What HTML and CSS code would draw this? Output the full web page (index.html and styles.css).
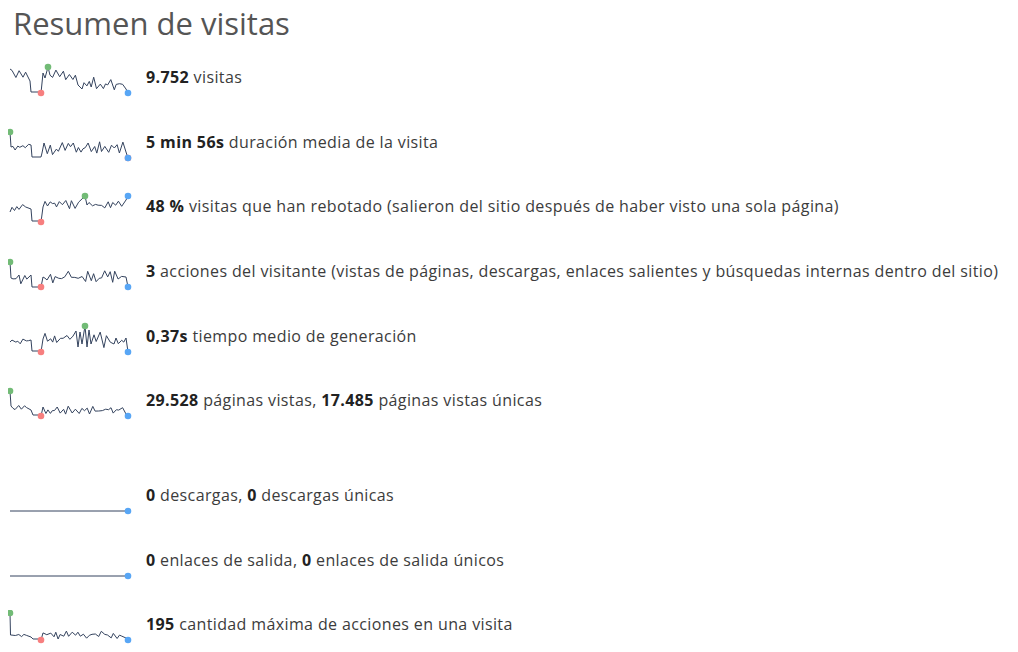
FILE: index.html
```html
<!DOCTYPE html>
<html>
    <head>
        <title>Resumen de visitas</title>
        <meta charset="utf-8">
        <link rel="stylesheet" href="styles.css">
    </head>
    <body>
        <h2 class="widget-title">Resumen de visitas</h2>
        <div class="sparklines">
            <div class="sparkline-row"><svg class="spark" data-spark="visits"></svg><span class="spark-text"><strong>9.752</strong> visitas</span></div>
            <div class="sparkline-row"><svg class="spark" data-spark="duration"></svg><span class="spark-text"><strong>5 min 56s</strong> duración media de la visita</span></div>
            <div class="sparkline-row"><svg class="spark" data-spark="bounce"></svg><span class="spark-text"><strong>48 %</strong> visitas que han rebotado (salieron del sitio después de haber visto una sola página)</span></div>
            <div class="sparkline-row"><svg class="spark" data-spark="actions"></svg><span class="spark-text"><strong>3</strong> acciones del visitante (vistas de páginas, descargas, enlaces salientes y búsquedas internas dentro del sitio)</span></div>
            <div class="sparkline-row"><svg class="spark" data-spark="generation"></svg><span class="spark-text"><strong>0,37s</strong> tiempo medio de generación</span></div>
            <div class="sparkline-row"><svg class="spark" data-spark="pageviews"></svg><span class="spark-text"><strong>29.528</strong> páginas vistas, <strong>17.485</strong> páginas vistas únicas</span></div>
            <div class="sparkline-separator"></div>
            <div class="sparkline-row"><svg class="spark" data-spark="flat"></svg><span class="spark-text"><strong>0</strong> descargas, <strong>0</strong> descargas únicas</span></div>
            <div class="sparkline-row"><svg class="spark" data-spark="flat"></svg><span class="spark-text"><strong>0</strong> enlaces de salida, <strong>0</strong> enlaces de salida únicos</span></div>
            <div class="sparkline-row"><svg class="spark" data-spark="maxactions"></svg><span class="spark-text"><strong>195</strong> cantidad máxima de acciones en una visita</span></div>
        </div>

        <script>
            // x runs 2..120, y 4 (max) .. 30 (min) inside a 124x34 box
            var sparks = {
                visits: { seed: 3, green: [40, 4], red: [33, 30], cmds: [
                    ['p', 2, 6], ['z', 4, 21, 6, 17], ['p', 22, 18], ['p', 23, 29], ['p', 32, 29], ['p', 33, 30],
                    ['p', 35, 10], ['p', 37, 15], ['p', 40, 4], ['z', 42, 68, 7, 19], ['p', 70, 22], ['p', 74, 26],
                    ['z', 76, 116, 14, 27], ['p', 118, 26], ['p', 120, 30] ] },
                duration: { seed: 7, green: [2, 4], red: [120, 30], cmds: [
                    ['p', 2, 4], ['p', 3, 19], ['z', 5, 21, 16, 23], ['p', 23, 17], ['p', 24, 29], ['p', 33, 29],
                    ['p', 34, 25], ['z', 36, 116, 13, 27], ['p', 118, 24], ['p', 120, 30] ] },
                bounce: { seed: 11, green: [77, 4], red: [33, 30], cmds: [
                    ['p', 2, 20], ['z', 4, 21, 11, 19], ['p', 23, 17], ['p', 24, 29], ['p', 32, 29], ['p', 33, 30],
                    ['p', 35, 15], ['z', 37, 74, 6, 17], ['p', 77, 4], ['p', 79, 13], ['z', 81, 116, 8, 19], ['p', 118, 8], ['p', 120, 4] ] },
                actions: { seed: 5, green: [2, 5], red: [33, 30], cmds: [
                    ['p', 2, 5], ['p', 3, 21], ['z', 5, 21, 15, 28], ['p', 23, 18], ['p', 24, 30], ['p', 32, 30], ['p', 33, 30],
                    ['p', 35, 20], ['z', 37, 116, 13, 29], ['p', 118, 20], ['p', 120, 30] ] },
                generation: { seed: 13, green: [77, 4], red: [33, 30], cmds: [
                    ['p', 2, 20], ['z', 4, 21, 16, 22], ['p', 23, 18], ['p', 24, 29], ['p', 32, 29], ['p', 33, 30],
                    ['p', 35, 17], ['z', 37, 66, 11, 21], ['p', 68, 9], ['p', 70, 25], ['p', 72, 10], ['p', 74, 22],
                    ['p', 77, 4], ['p', 79, 25], ['p', 81, 8], ['p', 83, 22], ['z', 86, 104, 10, 26], ['p', 106, 22],
                    ['z', 108, 116, 16, 22], ['p', 118, 16], ['p', 120, 30] ] },
                pageviews: { seed: 17, green: [2, 5], red: [33, 30], cmds: [
                    ['p', 2, 5], ['p', 3, 20], ['z', 5, 21, 19, 25], ['p', 23, 24], ['p', 25, 29], ['p', 32, 29], ['p', 33, 30],
                    ['z', 35, 116, 20, 29], ['p', 118, 28], ['p', 120, 30] ] },
                flat: { seed: 1, red: null, cmds: [ ['p', 2, 30], ['p', 120, 30] ] },
                maxactions: { seed: 19, green: [2, 3], red: [33, 30], cmds: [
                    ['p', 2, 3], ['p', 2.5, 25], ['z', 4, 21, 24, 27], ['p', 23, 27], ['p', 25, 29], ['p', 32, 29], ['p', 33, 30],
                    ['z', 35, 116, 21, 29], ['p', 118, 28], ['p', 120, 30] ] }
            }

            function makeRandom(seed) {
                var s = seed * 9301 + 49297
                return function () {
                    s = (s * 9301 + 49297) % 233280
                    return s / 233280
                }
            }

            function buildPoints(spec) {
                var rand = makeRandom(spec.seed)
                var pts = []
                spec.cmds.forEach(function (c) {
                    if (c[0] === 'p') {
                        pts.push([c[1], c[2]])
                    } else {
                        var x = c[1], up = true
                        while (x <= c[2]) {
                            var half = (c[4] - c[3]) * 0.6
                            var y = up ? c[3] + rand() * half : c[4] - rand() * half
                            pts.push([x, y])
                            up = !up
                            x += 1.8 + rand() * 2.2
                        }
                    }
                })
                return pts
            }

            function dot(x, y, color) {
                return '<circle cx="' + x + '" cy="' + y + '" r="3.3" fill="' + color + '"/>'
            }

            var svgs = document.querySelectorAll('.spark')
            for (var i = 0; i < svgs.length; i++) {
                var spec = sparks[svgs[i].getAttribute('data-spark')]
                var pts = buildPoints(spec)
                var d = pts.map(function (p) { return p[0].toFixed(1) + ',' + p[1].toFixed(1) }).join(' ')
                var last = pts[pts.length - 1]
                var html = '<polyline points="' + d + '" fill="none" stroke="#34435e" stroke-width="1" stroke-linejoin="round"/>'
                if (spec.red) html += dot(spec.red[0], spec.red[1], '#f77f7f')
                if (spec.green) html += dot(spec.green[0], spec.green[1], '#72bb76')
                html += dot(last[0], last[1], '#58a6f5')
                svgs[i].setAttribute('viewBox', '0 0 124 34')
                svgs[i].innerHTML = html
            }
        </script>
    </body>
</html>
```

FILE: styles.css
```css
body {
    margin: 8px;
    font-family: "Open Sans", "Noto Sans", sans-serif;
    color: #333;
    background: #fff;
}
.widget-title {
    margin: 0 0 7px 0;
    padding-left: 5px;
    font-size: 31px;
    line-height: 30px;
    font-weight: normal;
    color: #555;
}
.sparkline-row {
    display: flex;
    align-items: center;
    height: 64.6px;
}
.spark {
    flex: none;
    width: 124px;
    height: 34px;
    margin-top: 6px;
}
.spark-text {
    margin-left: 14px;
    font-size: 16px;
    letter-spacing: 0.38px;
    color: #3c3c3c;
    white-space: nowrap;
}
.spark-text strong {
    color: #222;
    font-weight: bold;
}
.sparkline-separator {
    height: 30.4px;
}
```
